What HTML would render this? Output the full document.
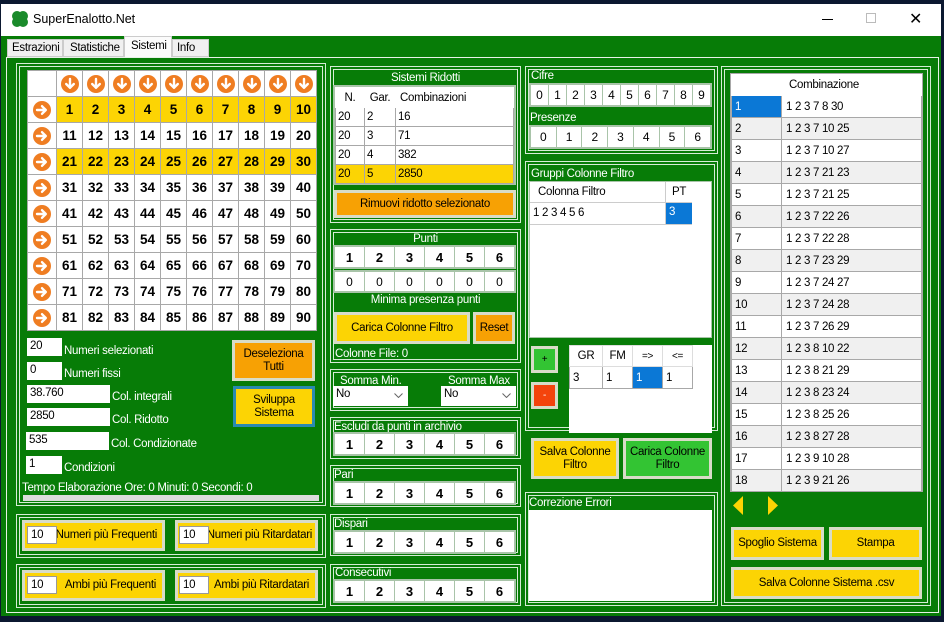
<!DOCTYPE html>
<html><head><meta charset="utf-8">
<style>
*{box-sizing:border-box;margin:0;padding:0}
body{width:944px;height:622px;overflow:hidden;background:#0b1830;font-family:"Liberation Sans",sans-serif;font-size:11.5px;letter-spacing:-0.3px;position:relative}
.a{position:absolute}
.win{left:1px;top:4px;width:940px;height:612px;background:#077c07}
.title{left:1px;top:4px;width:940px;height:32px;background:#fff}
.grp{position:absolute;border:1px solid #d6ecd6;box-shadow:inset 0 0 0 2px #077c07,inset 0 0 0 3px #d6ecd6}
.lbl{position:absolute;color:#fff;font-size:11.5px;white-space:nowrap}
.tb{position:absolute;background:#fff;color:#000;font-size:11.5px;padding:2px 0 0 3px;height:18px}
.btn{position:absolute;border:3px solid #d8dcc8;display:flex;align-items:center;justify-content:center;text-align:center;font-size:11.5px;color:#000;line-height:13px}
.y{background:#fcd404}.o{background:#f7a104}.g{background:#33c433}
table{border-collapse:collapse;table-layout:fixed;position:absolute}
td{border:1px solid #a8a8a8;background:#fff;text-align:center;font-size:11.5px}
.row6{position:absolute;display:flex;border:2px solid #a9c4a9;background:#a9c4a9;gap:1px}
.row6 div{flex:1;background:#fff;display:flex;align-items:center;justify-content:center;font-weight:bold;font-size:13px;letter-spacing:0}
.row6.n div{font-weight:normal;font-size:12px}
.ic{display:inline-block;vertical-align:middle}
.gy td{background:#fcd404}
.num td{font-weight:bold;font-size:13.5px;letter-spacing:0}
</style></head><body>
<div class="a win"></div>
<div class="a title"></div>
<svg class="a" style="left:11px;top:10px" width="18" height="18" viewBox="0 0 18 18"><circle cx="6" cy="6" r="5" fill="#1a8a2a"/><circle cx="12" cy="6" r="5" fill="#1a8a2a"/><circle cx="6" cy="12" r="5" fill="#1a8a2a"/><circle cx="12" cy="12" r="5" fill="#1a8a2a"/></svg>
<div class="lbl" style="left:33px;top:12px;color:#000;font-size:12.5px;letter-spacing:0">SuperEnalotto.Net</div>
<div class="a" style="left:822px;top:19px;width:11px;height:1px;background:#000"></div>
<div class="a" style="left:866px;top:13px;width:10px;height:10px;border:1px solid #bbb"></div>
<div class="lbl" style="left:909px;top:9px;color:#000;font-size:16px">✕</div>
<!-- tabs -->
<div class="a" style="left:7px;top:39px;width:56px;height:18px;background:#f0f0f0;border:1px solid #ccc;padding:2px 0 0 4px">Estrazioni</div>
<div class="a" style="left:63px;top:39px;width:61px;height:18px;background:#f0f0f0;border:1px solid #ccc;padding:2px 0 0 6px">Statistiche</div>
<div class="a" style="left:124px;top:36px;width:48px;height:22px;background:#fbfbfb;border:1px solid #ccc;border-bottom:none;padding:3px 0 0 6px">Sistemi</div>
<div class="a" style="left:172px;top:39px;width:37px;height:18px;background:#f0f0f0;border:1px solid #ccc;padding:2px 0 0 4px">Info</div>
<div class="a" style="left:6px;top:57px;width:933px;height:556px;border:1px solid #e8f2e8"></div>

<svg width="0" height="0" style="position:absolute"><defs>
<g id="dn"><circle cx="9" cy="9" r="9" fill="#ef7d22"/><path d="M9 4V12.5M5.2 9L9 12.8L12.8 9" fill="none" stroke="#fff" stroke-width="2.4" stroke-linecap="round" stroke-linejoin="round"/></g>
<g id="rt"><circle cx="9" cy="9" r="9" fill="#ef7d22"/><path d="M4 9H12.5M9 5.2L12.8 9L9 12.8" fill="none" stroke="#fff" stroke-width="2.4" stroke-linecap="round" stroke-linejoin="round"/></g>
</defs></svg>

<!-- left group -->
<div class="grp" style="left:16px;top:63px;width:310px;height:443px"></div>
<div id="g"></div>
<script>
var h='<table style="left:27px;top:70px;width:289px"><colgroup><col style="width:29px"><col span="10" style="width:26px"></colgroup><tr style="height:26px"><td></td>';
for(var c=0;c<10;c++)h+='<td><svg class="ic" width="18" height="18"><use href="#dn"/></svg></td>';
h+='</tr>';
for(var r=0;r<9;r++){h+='<tr style="height:26px" class="num'+((r==0||r==2)?' gy':'')+'"><td style="background:#fff"><svg class="ic" width="18" height="18"><use href="#rt"/></svg></td>';for(var c=1;c<=10;c++)h+='<td>'+(r*10+c)+'</td>';h+='</tr>';}
h+='</table>';document.getElementById('g').outerHTML=h;
</script>
<div class="tb" style="left:27px;top:338px;width:35px">20</div><div class="lbl" style="left:64px;top:345px">Numeri selezionati</div>
<div class="tb" style="left:27px;top:362px;width:35px">0</div><div class="lbl" style="left:64px;top:368px">Numeri fissi</div>
<div class="tb" style="left:27px;top:385px;width:83px">38.760</div><div class="lbl" style="left:112px;top:391px">Col. integrali</div>
<div class="tb" style="left:27px;top:408px;width:83px">2850</div><div class="lbl" style="left:112px;top:414px">Col. Ridotto</div>
<div class="tb" style="left:26px;top:432px;width:83px">535</div><div class="lbl" style="left:111px;top:438px">Col. Condizionate</div>
<div class="tb" style="left:26px;top:456px;width:36px">1</div><div class="lbl" style="left:64px;top:462px">Condizioni</div>
<div class="lbl" style="left:22px;top:482px">Tempo Elaborazione Ore: 0 Minuti: 0 Secondi: 0</div>
<div class="a" style="left:23px;top:495px;width:296px;height:6px;background:#dcdcdc"></div>
<div class="btn o" style="left:232px;top:340px;width:83px;height:41px">Deseleziona<br>Tutti</div>
<div class="btn y" style="left:233px;top:386px;width:82px;height:41px;border-color:#2a8ab0">Sviluppa<br>Sistema</div>

<div class="grp" style="left:16px;top:514px;width:310px;height:44px"></div>
<div class="btn y" style="left:22px;top:520px;width:143px;height:31px;justify-content:flex-end;padding-right:5px">Numeri più Frequenti</div>
<div class="tb" style="left:27px;top:526px;width:30px;border:1px solid #999">10</div>
<div class="btn y" style="left:175px;top:520px;width:143px;height:31px;justify-content:flex-end;padding-right:3px">Numeri più Ritardatari</div>
<div class="tb" style="left:179px;top:526px;width:30px;border:1px solid #999">10</div>
<div class="grp" style="left:16px;top:564px;width:310px;height:44px"></div>
<div class="btn y" style="left:22px;top:570px;width:143px;height:31px;justify-content:flex-end;padding-right:6px">Ambi più Frequenti</div>
<div class="tb" style="left:27px;top:576px;width:30px;border:1px solid #999">10</div>
<div class="btn y" style="left:175px;top:570px;width:143px;height:31px;justify-content:flex-end;padding-right:6px">Ambi più Ritardatari</div>
<div class="tb" style="left:179px;top:576px;width:30px;border:1px solid #999">10</div>

<!-- middle col -->
<div class="grp" style="left:330px;top:66px;width:191px;height:157px"></div>
<div class="lbl" style="left:330px;top:72px;width:191px;text-align:center">Sistemi Ridotti</div>
<div class="a" style="left:333px;top:85px;width:183px;height:100px;background:#fff;border:2px solid #a9c4a9"></div>
<table style="left:335px;top:87px;width:179px">
<colgroup><col style="width:29px"><col style="width:31px"><col></colgroup>
<tr style="height:20px"><td style="border-color:#fff">N.</td><td style="border-color:#fff">Gar.</td><td style="text-align:left;padding-left:4px;border-color:#fff">Combinazioni</td></tr>
<tr style="height:19px"><td style="text-align:left;padding-left:2px">20</td><td style="text-align:left;padding-left:2px">2</td><td style="text-align:left;padding-left:2px">16</td></tr>
<tr style="height:19px"><td style="text-align:left;padding-left:2px">20</td><td style="text-align:left;padding-left:2px">3</td><td style="text-align:left;padding-left:2px">71</td></tr>
<tr style="height:19px"><td style="text-align:left;padding-left:2px">20</td><td style="text-align:left;padding-left:2px">4</td><td style="text-align:left;padding-left:2px">382</td></tr>
<tr style="height:19px" class="gy"><td style="text-align:left;padding-left:2px">20</td><td style="text-align:left;padding-left:2px">5</td><td style="text-align:left;padding-left:2px">2850</td></tr>
</table>
<div class="btn o" style="left:334px;top:190px;width:182px;height:28px">Rimuovi ridotto selezionato</div>

<div class="grp" style="left:330px;top:229px;width:191px;height:134px"></div>
<div class="lbl" style="left:330px;top:233px;width:191px;text-align:center">Punti</div>
<div class="row6" style="left:333px;top:245px;width:183px;height:24px"><div>1</div><div>2</div><div>3</div><div>4</div><div>5</div><div>6</div></div>
<div class="row6 n" style="left:333px;top:270px;width:183px;height:23px"><div>0</div><div>0</div><div>0</div><div>0</div><div>0</div><div>0</div></div>
<div class="lbl" style="left:330px;top:294px;width:191px;text-align:center">Minima presenza punti</div>
<div class="btn y" style="left:334px;top:312px;width:136px;height:32px">Carica Colonne Filtro</div>
<div class="btn o" style="left:473px;top:312px;width:42px;height:32px">Reset</div>
<div class="lbl" style="left:335px;top:348px">Colonne File: 0</div>

<div class="grp" style="left:330px;top:369px;width:191px;height:42px"></div>
<div class="lbl" style="left:340px;top:375px">Somma Min.</div>
<div class="lbl" style="left:448px;top:375px">Somma Max</div>
<div class="tb" style="left:333px;top:386px;width:75px;height:20px">No<svg style="position:absolute;right:5px;top:7px" width="9" height="5"><path d="M0.5 0.5L4.5 4.5L8.5 0.5" fill="none" stroke="#666"/></svg></div>
<div class="tb" style="left:441px;top:386px;width:75px;height:20px">No<svg style="position:absolute;right:5px;top:7px" width="9" height="5"><path d="M0.5 0.5L4.5 4.5L8.5 0.5" fill="none" stroke="#666"/></svg></div>

<div class="grp" style="left:330px;top:417px;width:191px;height:42px"></div>
<div class="lbl" style="left:334px;top:421px">Escludi da punti in archivio</div>
<div class="row6" style="left:333px;top:432px;width:183px;height:24px"><div>1</div><div>2</div><div>3</div><div>4</div><div>5</div><div>6</div></div>
<div class="grp" style="left:330px;top:465px;width:191px;height:42px"></div>
<div class="lbl" style="left:334px;top:469px">Pari</div>
<div class="row6" style="left:333px;top:481px;width:183px;height:24px"><div>1</div><div>2</div><div>3</div><div>4</div><div>5</div><div>6</div></div>
<div class="grp" style="left:330px;top:514px;width:191px;height:42px"></div>
<div class="lbl" style="left:334px;top:518px">Dispari</div>
<div class="row6" style="left:333px;top:530px;width:183px;height:24px"><div>1</div><div>2</div><div>3</div><div>4</div><div>5</div><div>6</div></div>
<div class="grp" style="left:330px;top:564px;width:191px;height:42px"></div>
<div class="lbl" style="left:335px;top:567px">Consecutivi</div>
<div class="row6" style="left:333px;top:579px;width:183px;height:24px"><div>1</div><div>2</div><div>3</div><div>4</div><div>5</div><div>6</div></div>

<!-- third col -->
<div class="grp" style="left:525px;top:66px;width:193px;height:88px"></div>
<div class="lbl" style="left:531px;top:70px">Cifre</div>
<div class="row6 n" style="left:529px;top:83px;width:183px;height:24px"><div>0</div><div>1</div><div>2</div><div>3</div><div>4</div><div>5</div><div>6</div><div>7</div><div>8</div><div>9</div></div>
<div class="lbl" style="left:530px;top:112px">Presenze</div>
<div class="row6 n" style="left:529px;top:125px;width:183px;height:24px"><div>0</div><div>1</div><div>2</div><div>3</div><div>4</div><div>5</div><div>6</div></div>

<div class="grp" style="left:525px;top:161px;width:193px;height:270px"></div>
<div class="lbl" style="left:531px;top:168px">Gruppi Colonne Filtro</div>
<div class="a" style="left:529px;top:181px;width:183px;height:157px;background:#fff;border:1px solid #a9c4a9"></div>
<div class="lbl" style="left:538px;top:186px;color:#000">Colonna Filtro</div>
<div class="lbl" style="left:672px;top:186px;color:#000">PT</div>
<div class="a" style="left:530px;top:202px;width:162px;height:1px;background:#ccc"></div>
<div class="a" style="left:665px;top:182px;width:1px;height:42px;background:#ccc"></div>
<div class="a" style="left:530px;top:224px;width:162px;height:1px;background:#ccc"></div>
<div class="lbl" style="left:533px;top:207px;color:#000">1 2 3 4 5 6</div>
<div class="a" style="left:666px;top:203px;width:26px;height:21px;background:#0b78d6;color:#fff;padding:3px 0 0 3px">3</div>
<div class="btn g" style="left:531px;top:346px;width:27px;height:27px;font-size:10px">+</div>
<div class="btn" style="left:531px;top:382px;width:27px;height:27px;background:#f4440c;color:#fff;font-size:10px">-</div>
<div class="a" style="left:569px;top:345px;width:143px;height:88px;background:#fff"></div>
<table style="left:569px;top:345px;width:123px">
<colgroup><col style="width:33px"><col style="width:30px"><col style="width:30px"><col style="width:30px"></colgroup>
<tr style="height:21px"><td style="border-color:#ddd">GR</td><td style="border-color:#ddd">FM</td><td style="border-color:#ddd;font-size:10px">=&gt;</td><td style="border-color:#ddd;font-size:10px">&lt;=</td></tr>
<tr style="height:22px"><td style="text-align:left;padding-left:3px">3</td><td style="text-align:left;padding-left:3px">1</td><td style="text-align:left;padding-left:3px;background:#0b78d6;color:#fff">1</td><td style="text-align:left;padding-left:3px">1</td></tr>
</table>
<div class="btn y" style="left:531px;top:438px;width:88px;height:41px">Salva Colonne<br>Filtro</div>
<div class="btn g" style="left:623px;top:438px;width:89px;height:41px">Carica Colonne<br>Filtro</div>

<div class="grp" style="left:525px;top:492px;width:193px;height:114px"></div>
<div class="lbl" style="left:529px;top:497px">Correzione Errori</div>
<div class="a" style="left:529px;top:510px;width:183px;height:91px;background:#fff"></div>

<!-- right col -->
<div class="grp" style="left:721px;top:66px;width:210px;height:540px"></div>
<div id="rg"></div>
<script>
var d=["1 2 3 7 8 30","1 2 3 7 10 25","1 2 3 7 10 27","1 2 3 7 21 23","1 2 3 7 21 25","1 2 3 7 22 26","1 2 3 7 22 28","1 2 3 7 23 29","1 2 3 7 24 27","1 2 3 7 24 28","1 2 3 7 26 29","1 2 3 8 10 22","1 2 3 8 21 29","1 2 3 8 23 24","1 2 3 8 25 26","1 2 3 8 27 28","1 2 3 9 10 28","1 2 3 9 21 26"];
var h='<div class="a" style="left:730px;top:73px;width:193px;height:419px;background:#f0f0f0;border:1px solid #a8a8a8"></div><table style="left:731px;top:74px;width:191px"><colgroup><col style="width:50px"><col></colgroup><tr style="height:21px"><td style="border-color:#fff;background:#fff"></td><td style="border-color:#fff;background:#fff;text-align:left;padding-left:7px">Combinazione</td></tr>';
for(var i=0;i<18;i++){var bg=(i%2==1)?'#f0f0f0':'#fff';var ib=i==0?'background:#0b78d6;color:#fff':'background:'+bg;h+='<tr style="height:22px"><td style="text-align:left;padding-left:3px;'+ib+'">'+(i+1)+'</td><td style="text-align:left;padding-left:4px;background:'+bg+'">'+d[i]+'</td></tr>';}
h+='</table>';document.getElementById('rg').outerHTML=h;
</script>
<svg class="a" style="left:732px;top:496px" width="50" height="19"><polygon points="11,0 11,19 1,9.5" fill="#fcd404"/><polygon points="36,0 36,19 46,9.5" fill="#fcd404"/></svg>
<div class="btn y" style="left:731px;top:527px;width:93px;height:33px">Spoglio Sistema</div>
<div class="btn y" style="left:829px;top:527px;width:93px;height:33px">Stampa</div>
<div class="btn y" style="left:731px;top:567px;width:191px;height:32px">Salva Colonne Sistema .csv</div>
</body></html>
